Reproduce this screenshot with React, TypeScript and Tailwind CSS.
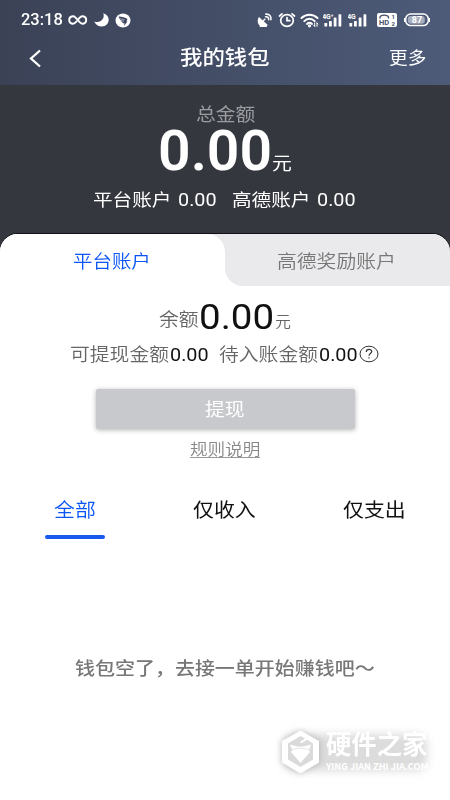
import React from "react";

const CJK = "font-['Roboto','Noto_Sans_CJK_SC',sans-serif]";

/* Fixed-width slot whose glyphs are widened from the left edge. */
function T({ box, text, children }: { box: string; text: string; children: React.ReactNode }) {
  return (
    <span className={`block shrink-0 whitespace-nowrap ${box}`}>
      <span className={`block w-max origin-left leading-none ${text}`}>{children}</span>
    </span>
  );
}

function Signal({ label }: { label: string }) {
  return (
    <svg width="20" height="15" viewBox="0 0 20 15" fill="white">
      <text x="-0.8" y="5.600" fontSize="6.800" fontWeight="700" fontFamily="Roboto, sans-serif">{label}</text>
      <rect x="1.4" y="10" width="2.8" height="3.5" rx=".6" />
      <rect x="6" y="8" width="2.8" height="5.5" rx=".6" />
      <rect x="10.7" y="4.5" width="2.8" height="9" rx=".6" />
      <rect x="15.5" y="1.3" width="2.8" height="12.2" rx=".6" />
    </svg>
  );
}

function StatusBar() {
  return (
    <div className="flex h-[40px] items-center pl-[21px] text-white">
      <T box="w-[47px]" text="text-[16px] scale-x-[1.03] font-medium">23:18</T>
      <svg width="20" height="14" viewBox="0 0 20 14" fill="none" stroke="white" strokeWidth="1.9" strokeLinecap="round">
        <path d="M10.200 6.200 12.200 4.300C14 2.500 18.200 3 18.200 7s-4.200 4.500-6 2.700L7.300 4.300C5.500 2.500 1.200 3 1.200 7s4.300 4.500 6.100 2.700l1.200-1.200" />
      </svg>
      <svg className="ml-[6px]" width="15" height="14" viewBox="0 0 15 14" fill="white">
        <path d="M9.300.3c2 5.500-3 10.300-9.100 8.100C1.500 11.500 4.500 13.500 8 13.500c3.800 0 6.700-3 6.700-6.700C14.700 3.800 12.500 1.200 9.300.3Z" />
      </svg>
      <svg className="ml-[6px]" width="16" height="15" viewBox="0 0 16 15">
        <ellipse cx="8" cy="7.500" rx="7.500" ry="7" fill="white" />
        <path d="M3.500 3.600c3 .3 7.300 1 8.600 2.200.6.700-.2 1.800-.8 2.700h1.200L8.800 13l.7-2.700H8.200C6.200 8.600 4.400 6 3.500 3.600Z" fill="#3e4760" />
        <path d="M5 5.800l4.500 1M6 7.600l3 .6" stroke="white" strokeWidth=".5" />
      </svg>
      <div className="ml-[126px] flex items-center">
        <svg width="16" height="15" viewBox="0 0 16 15" fill="white">
          <path d="M2 4 10.800 12C7.700 14.700 3.500 14 1.700 11.500.3 9.500.3 6 2 4Z" />
          <path d="M6 8 8.300 5.700" stroke="white" strokeWidth="1.300" />
          <path d="M8.600 3.700c2-.2 3.300 1 3 2.900M8.900 1.100c3.500-.2 5.500 2 5 5.600" fill="none" stroke="white" strokeWidth="1.600" strokeLinecap="round" />
          <path d="M3.500 11h5.500l1 3H2.500Z" />
        </svg>
        <svg className="ml-[5px]" width="18" height="16" viewBox="0 0 18 16" fill="none" stroke="white" strokeWidth="1.700" strokeLinecap="round">
          <ellipse cx="9" cy="8.500" rx="6.300" ry="5.800" />
          <path d="M9 5.500v3.200h2.800M1.500 4 4 1.800M16.500 4 14 1.800" />
        </svg>
        <svg className="ml-[4px]" width="19" height="15" viewBox="0 0 19 15" fill="none" stroke="white" strokeWidth="2" strokeLinecap="round">
          <path d="M1.500 5C6 .7 13 .7 17.500 5M4.300 8.100c3-3 7.400-3 10.400 0M7 10.900c1.500-1.300 3.500-1.300 5 0" />
          <circle cx="9.500" cy="12.800" r=".6" fill="white" />
          <path d="M14.700 10v3.300M14.700 13.300l-1-1M17 13.300V10M17 10l.8 1" strokeWidth="1" />
        </svg>
        <span className="ml-[4px] flex"><Signal label="4G⁺" /></span>
        <span className="ml-[5px] flex"><Signal label="4G" /></span>
        <svg className="ml-[9px]" width="20" height="14" viewBox="0 0 20 14">
          <rect width="20" height="14" rx="2" fill="white" />
          <path d="M3 5.500V4.300C3.500 1.400 11 1.400 11.500 4.300v1.200" fill="none" stroke="#475169" strokeWidth="1.400" />
          <g fill="#475169" fontWeight="700" fontFamily="Roboto, sans-serif">
            <text x="2" y="12.300" fontSize="7.500">HD</text>
            <text x="14.500" y="6.200" fontSize="6">1</text>
            <text x="14.500" y="12.500" fontSize="6">2</text>
          </g>
        </svg>
        <svg className="ml-[7px]" width="26" height="14" viewBox="0 0 26 14">
          <rect x="1.700" y="1" width="22.600" height="11.600" rx="5" fill="none" stroke="white" strokeWidth="1.500" />
          <path d="M.5 5v4M25.500 5v4" stroke="white" />
          <rect x="3.800" y="3" width="17" height="7.700" rx="3" fill="#a6adbc" />
          <text x="13" y="10.300" textAnchor="middle" fontSize="9" fontWeight="700" fill="white" fontFamily="Roboto, sans-serif">87</text>
        </svg>
      </div>
    </div>
  );
}

function Watermark() {
  return (
    <div className="absolute left-[281px] top-[730px] flex text-white">
      <div className="absolute inset-x-[2px] top-[4px] bottom-[3px] rounded-[10px] bg-[#dcdcdc] blur-[4px]" />
      <svg className="relative drop-shadow-[0_0_3px_rgba(0,0,0,0.2)]" width="40" height="44" viewBox="0 0 40 44">
        <path d="M19.500 1 37.500 11.500v21L19.500 43 1.500 32.500v-21Z" fill="#dadada" />
        <path fillRule="evenodd" fill="white" d="M19.500.5 38 11v21.500L19.500 43.500 1 32.500V11ZM18 7 7 13.500v16L19.500 37 32 29.500v-16L26 9.700l-5.500 3.500-1.800-1 5.300-3.700-4.500-2.500Z" />
        <path d="M9 14.500 16.500 16.500h6L30 14.500 28 20.500l1 1.500-9.500 11L10 22l1.500-1.500Z" fill="white" />
        <path d="M11 19.500l8-1.500 9 1.500" stroke="#dadada" strokeWidth=".7" fill="none" />
      </svg>
      <div className="relative ml-[5px] pt-[2px]">
        <T box="h-[30px] w-[103px]" text="text-[26px] font-bold scale-x-[0.975]">硬件之家</T>
        <T box="h-[12px] w-[103px]" text="font-['Noto_Sans_CJK_SC',sans-serif] text-[9.200px] font-bold">YING JIAN ZHI JIA.COM</T>
      </div>
    </div>
  );
}

export default function App() {
  return (
    <div className={`relative h-[800px] w-[450px] overflow-hidden bg-white ${CJK}`}>
      <header className="h-[85px] bg-linear-to-r from-[#3b4256] to-[#4d5b79]">
        <StatusBar />
        <nav className="flex h-[36px] items-center text-white">
          <svg className="ml-[28px]" width="14" height="20" viewBox="0 0 14 20" fill="none" stroke="white" strokeWidth="2.300">
            <path d="M12 2.500 3 10.500l9 8" />
          </svg>
          <T box="ml-[138px] w-[92px]" text="text-[20px] font-medium scale-x-[1.12]">我的钱包</T>
          <T box="ml-[116.500px] w-[40px]" text="text-[17px] scale-x-[1.1]">更多</T>
        </nav>
      </header>

      <section className="h-[151px] bg-[#35373f] text-white">
        <div className="flex h-[38px] items-start pl-[195.500px] pt-[21px]">
          <T box="w-[60px]" text="text-[18px] text-[#9b9ca0] scale-x-[1.1]">总金额</T>
        </div>
        <div className="flex h-[56px] items-baseline pl-[157.500px]">
          <T box="w-[114.500px]" text="text-[56px] font-semibold scale-x-[1.02]">0.00</T>
          <T box="w-[20px]" text="text-[18px] scale-x-[1.1]">元</T>
        </div>
        <div className="flex items-baseline pl-[93px] pt-[11.500px]">
          <T box="w-[85px]" text="text-[17.500px] scale-x-[1.12]">平台账户</T>
          <T box="w-[54px]" text="text-[18px] scale-x-[1.1]">0.00</T>
          <T box="w-[85px]" text="text-[17.500px] scale-x-[1.12]">高德账户</T>
          <T box="w-[40px]" text="text-[18px] scale-x-[1.1]">0.00</T>
        </div>
      </section>

      <main className="-mt-[2px]">
        <div className="bg-[#35373f]">
          <div className="flex h-[52px] overflow-hidden rounded-t-[18px] bg-white shadow-[0_-1px_0_#111216]">
            <div className="w-[225px] bg-[#eaeaec]">
              <div className="h-full rounded-tr-[18px] bg-white pl-[73px] pt-[19px]">
                <T box="w-[80px]" text="text-[18px] font-[350] text-[#0b55f5] scale-x-[1.08]">平台账户</T>
              </div>
            </div>
            <div className="flex-1 rounded-bl-[18px] bg-[#eaeaec] pl-[52px] pt-[19px]">
              <T box="w-[120px]" text="text-[18px] font-[350] text-[#777] scale-x-[1.1]">高德奖励账户</T>
            </div>
          </div>
        </div>

        <div className="flex h-[52px] items-baseline pl-[159px] pt-[14px]">
          <T box="-translate-y-[3px] w-[40px]" text="text-[18px] font-[350] text-[#666] scale-x-[1.1]">余额</T>
          <T box="w-[76px]" text="text-[35px] text-[#111] scale-x-[1.1]">0.00</T>
          <T box="-translate-y-[2.500px] w-[20px]" text="text-[14.500px] font-[350] text-[#666] scale-x-[1.1]">元</T>
        </div>
        <div className="flex h-[51px] items-baseline pl-[70px] pt-[8px]">
          <T box="w-[100px]" text="text-[18px] font-[350] text-[#666] scale-x-[1.1]">可提现金额</T>
          <T box="w-[49px]" text="text-[18px] text-[#111] scale-x-[1.1]">0.00</T>
          <T box="w-[100px]" text="text-[18px] font-[350] text-[#666] scale-x-[1.1]">待入账金额</T>
          <T box="w-[40px]" text="text-[18px] text-[#111] scale-x-[1.1]">0.00</T>
          <svg className="-mt-[1px] shrink-0 self-start" width="20" height="18" viewBox="0 0 20 18" fill="none" stroke="#333">
            <ellipse cx="10" cy="9" rx="9" ry="7.800" />
            <path d="M7.300 7c0-3.500 5.500-3.200 5.500-.5C12.800 8.200 10 8.300 10 10.800M10 12.200v1.300" strokeWidth="1.200" />
          </svg>
        </div>

        <button className="ml-[95.500px] flex h-[40px] w-[259px] items-start rounded-[2px] bg-[#c8c9cd] pl-[109px] pt-[12px] text-left text-white shadow-[0_1px_5px_rgba(0,0,0,0.3)]">
          <T box="w-[40px]" text="text-[18px] scale-x-[1.1]">提现</T>
        </button>
        <div className="ml-[190px] mt-[11px] h-[18px] w-[70px] border-b border-[#999] pt-[1.500px]">
          <T box="w-[70px]" text="text-[16px] font-[350] text-[#888] scale-x-[1.1]">规则说明</T>
        </div>

        <div className="mt-[43px] flex h-[34px] items-start text-[#111]">
          <T box="ml-[54px] w-[42px]" text="text-[19px] text-[#0b55f5] scale-x-[1.1] font-[350]">全部</T>
          <T box="ml-[97px] w-[64px]" text="text-[19px] scale-x-[1.1]">仅收入</T>
          <T box="ml-[86px] w-[64px]" text="text-[19px] scale-x-[1.1]">仅支出</T>
        </div>
        <div className="ml-[45px] h-[4px] w-[60px] rounded-full bg-[#1959ee]" />

        <div className="pl-[75px] pt-[121px]">
          <T box="w-[300px]" text="text-[18px] font-medium text-[#777] scale-x-[1.11]">钱包空了，去接一单开始赚钱吧～</T>
        </div>
      </main>
      <Watermark />
    </div>
  );
}
